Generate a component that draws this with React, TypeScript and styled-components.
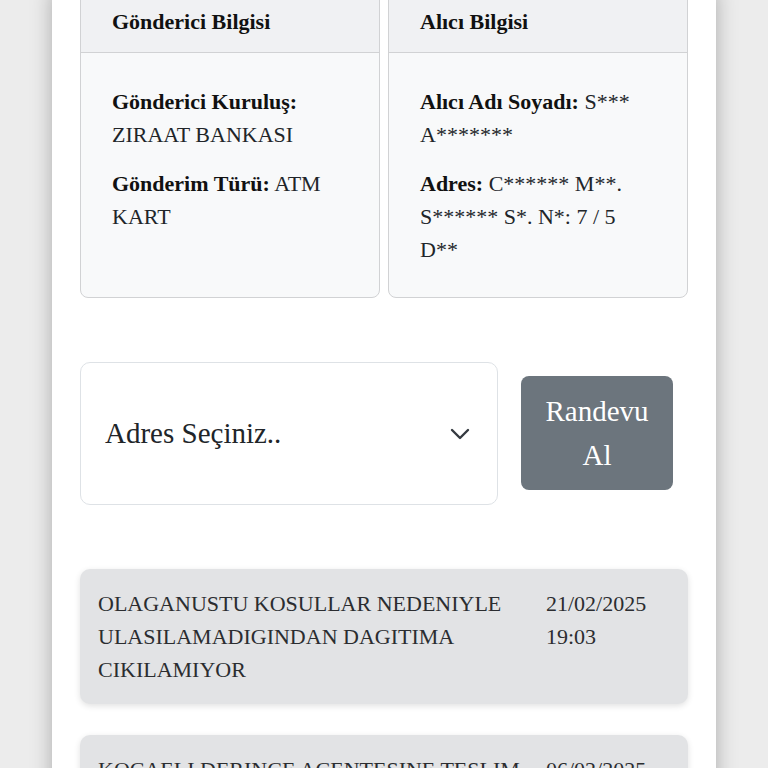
import { styled, createGlobalStyle } from "styled-components";

const GlobalStyle = createGlobalStyle`
  body {
    margin: 0;
    background-color: #ececec;
    font-family: "Liberation Serif", "Times New Roman", serif;
    color: #212529;
  }
`;

const Page = styled.div`
  width: 664px;
  margin: -10px auto 0 auto;
  padding: 0 28px 40px 28px;
  box-sizing: border-box;
  background-color: white;
  box-shadow: 0 0 20px rgba(0, 0, 0, 0.28);
  min-height: 900px;
`;

const InfoRow = styled.div`
  display: flex;
  gap: 8px;
`;

const InfoCard = styled.div`
  flex: 1;
  background-color: #f8f9fa;
  border: 1px solid #d1d2d4;
  border-radius: 8px;
  overflow: hidden;
  font-size: 22px;
  line-height: 33px;
`;

const InfoHeader = styled.div`
  background-color: #f0f1f3;
  border-bottom: 1px solid #d1d2d4;
  padding: 14px 31px;
  font-weight: bold;
  color: #111;
`;

const InfoBody = styled.div`
  padding: 32px 31px 15px 31px;
`;

const InfoLine = styled.p`
  margin: 0 0 16px 0;
`;

const Label = styled.b`
  font-weight: bold;
  color: #111;
`;

const AppointmentRow = styled.div`
  margin-top: 64px;
  display: flex;
  align-items: center;
  gap: 23px;
`;

const AddressSelect = styled.div`
  width: 418px;
  height: 143px;
  box-sizing: border-box;
  border: 1px solid #dee2e6;
  border-radius: 10px;
  background-color: white;
  padding: 0 27px 0 24px;
  display: flex;
  align-items: center;
  justify-content: space-between;
  font-size: 29px;
  color: #212529;
`;

const AppointmentButton = styled.button`
  width: 152px;
  padding: 13px 24px;
  margin-top: -2px;
  border: none;
  border-radius: 8px;
  background-color: #6c757d;
  color: white;
  font-family: "Liberation Serif", "Times New Roman", serif;
  font-size: 29px;
  line-height: 44px;
  text-align: center;
  cursor: pointer;
`;

const History = styled.div`
  margin-top: 64px;
  display: flex;
  flex-direction: column;
  gap: 31px;
`;

const HistoryItem = styled.div`
  background-color: #e2e3e5;
  border-radius: 10px;
  padding: 18px;
  display: flex;
  gap: 18px;
  font-size: 22px;
  line-height: 33px;
  color: #2b2d30;
  box-shadow: 0 2px 6px rgba(0, 0, 0, 0.12);
`;

const HistoryText = styled.div`
  flex: 1;
`;

const HistoryDate = styled.div`
  width: 124px;
  flex-shrink: 0;
`;

const events = [
  { text: "OLAGANUSTU KOSULLAR NEDENIYLE ULASILAMADIGINDAN DAGITIMA CIKILAMIYOR", date: "21/02/2025 19:03" },
  { text: "KOCAELI DERINCE ACENTESINE TESLIM EDILDI", date: "06/02/2025 10:12" },
  { text: "TRANSFER MERKEZINDEN CIKIS YAPILDI", date: "05/02/2025 22:41" },
];

function Chevron() {
  return (
    <svg width="20" height="12" viewBox="0 0 20 12" fill="none">
      <path d="M2 2l8 8 8-8" stroke="#343a40" strokeWidth="2.4" strokeLinecap="round" strokeLinejoin="round" />
    </svg>
  );
}

export default function App() {
  return (
    <>
      <GlobalStyle />
      <Page>
        <InfoRow>
          <InfoCard>
            <InfoHeader>Gönderici Bilgisi</InfoHeader>
            <InfoBody>
              <InfoLine><Label>Gönderici Kuruluş:</Label> ZIRAAT BANKASI</InfoLine>
              <InfoLine><Label>Gönderim Türü:</Label> ATM KART</InfoLine>
            </InfoBody>
          </InfoCard>
          <InfoCard>
            <InfoHeader>Alıcı Bilgisi</InfoHeader>
            <InfoBody>
              <InfoLine><Label>Alıcı Adı Soyadı:</Label> S*** A*******</InfoLine>
              <InfoLine><Label>Adres:</Label> C****** M**. S****** S*. N*: 7 / 5 D**</InfoLine>
            </InfoBody>
          </InfoCard>
        </InfoRow>

        <AppointmentRow>
          <AddressSelect>
            <span>Adres Seçiniz..</span>
            <Chevron />
          </AddressSelect>
          <AppointmentButton>Randevu Al</AppointmentButton>
        </AppointmentRow>

        <History>
          {events.map((ev) => (
            <HistoryItem key={ev.date}>
              <HistoryText>{ev.text}</HistoryText>
              <HistoryDate>{ev.date}</HistoryDate>
            </HistoryItem>
          ))}
        </History>
      </Page>
    </>
  );
}
